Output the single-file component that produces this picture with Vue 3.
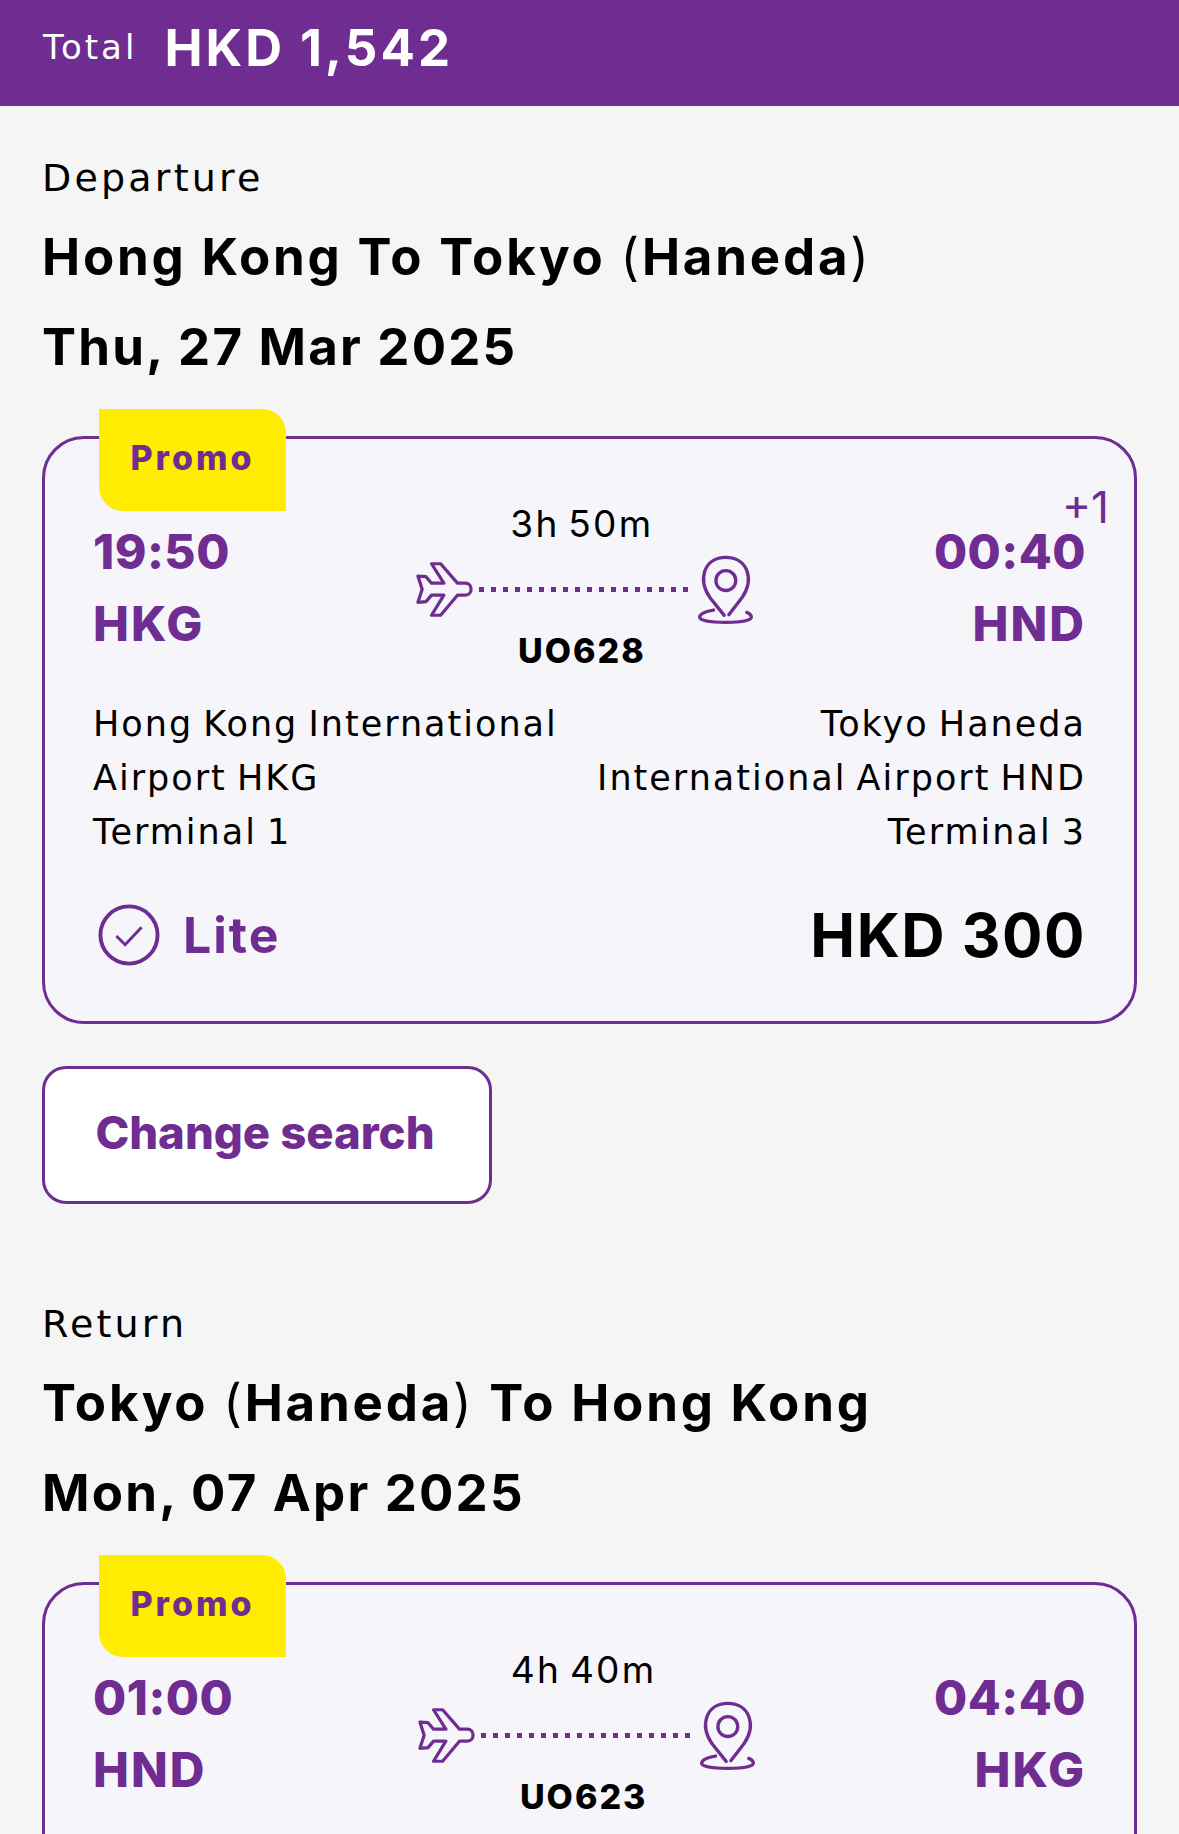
<script setup>
const sections = [
  {
    label: 'Departure',
    route: ['Hong Kong To Tokyo ', '(', 'Haneda', ')'],
    date: 'Thu, 27 Mar 2025',
    dep: '19:50', depCode: 'HKG',
    arr: '00:40', arrCode: 'HND', plus: '+1',
    duration: '3h 50m', flight: 'UO628',
    from: ['Hong Kong International', 'Airport HKG', 'Terminal 1'],
    to: ['Tokyo Haneda', 'International Airport HND', 'Terminal 3'],
    fare: 'Lite', price: 'HKD 300',
    button: 'Change search'
  },
  {
    label: 'Return',
    route: ['Tokyo ', '(', 'Haneda', ') To Hong Kong'],
    date: 'Mon, 07 Apr 2025',
    dep: '01:00', depCode: 'HND',
    arr: '04:40', arrCode: 'HKG', plus: '',
    duration: '4h 40m', flight: 'UO623',
    from: [], to: [], fare: '', price: '', button: ''
  }
]
</script>

<template>
  <div class="page">
    <header class="topbar">
      <span class="total-label">Total</span>
      <span class="total-value">HKD 1,542</span>
    </header>

    <section v-for="s in sections" :key="s.label" class="leg">
      <div class="leg-label">{{ s.label }}</div>
      <h2 class="leg-title">{{ s.route[0] }}<span class="paren">{{ s.route[1] }}</span>{{ s.route[2] }}<span class="paren">{{ s.route[3].charAt(0) }}</span>{{ s.route[3].slice(1) }}</h2>
      <h2 class="leg-title leg-date">{{ s.date }}</h2>

      <div class="card">
        <div class="badge">Promo</div>

        <div class="times">
          <div class="side">
            <div class="big time">{{ s.dep }}</div>
            <div class="big code">{{ s.depCode }}</div>
          </div>
          <div class="mid">
            <div class="duration">{{ s.duration }}</div>
            <div class="path">
              <svg class="plane" viewBox="104 240 176 175" fill="none" stroke="#6f2c91" stroke-width="10" stroke-linejoin="round">
                <path d="M256 308H232L180 248H152L190 308H152L135 288L110 286L123 327L110 367L135 365L152 345H190L152 407H180L232 345H256C280 345 280 308 256 308Z" />
              </svg>
              <span class="dots"></span>
              <svg class="pin" viewBox="950 225 172 214" fill="none" stroke="#6f2c91" stroke-width="10" stroke-linecap="round">
                <circle cx="1037" cy="305" r="30" />
                <path d="M1046 408L1085 358C1125 300 1102 235 1037 235C972 235 950 300 990 358L1032 410" />
                <path d="M1000 394C975 398 958 405 958 416C958 426 990 431 1037 431C1084 431 1114 426 1114 416C1114 409 1108 404 1100 401" />
              </svg>
            </div>
            <div class="flight">{{ s.flight }}</div>
          </div>
          <div class="side right">
            <span v-if="s.plus" class="plus">{{ s.plus }}</span>
            <div class="big time">{{ s.arr }}</div>
            <div class="big code">{{ s.arrCode }}</div>
          </div>
        </div>

        <div v-if="s.from.length" class="airports">
          <div><div v-for="l in s.from" :key="l">{{ l }}</div></div>
          <div class="right"><div v-for="l in s.to" :key="l">{{ l }}</div></div>
        </div>

        <div v-if="s.fare" class="fare-row">
          <div class="fare">
            <svg class="check" viewBox="0 0 64 64" fill="none" stroke="#6f2c91">
              <circle cx="32" cy="32" r="29.5" stroke-width="4" />
              <path d="M19 33L28 42L45 24" stroke-width="3" />
            </svg>
            <span>{{ s.fare }}</span>
          </div>
          <div class="price">{{ s.price }}</div>
        </div>
      </div>

      <button v-if="s.button" class="change">{{ s.button }}</button>
    </section>
  </div>
</template>

<style scoped>
.page {
  height: 1834px;
  overflow: hidden;
  background: #f5f5f5;
  color: #000;
  font-family: Inter, "Noto Sans", sans-serif;
}
.topbar {
  height: 106px;
  background: #6f2c91;
  color: #fff;
  display: flex;
  align-items: center;
  padding: 0 43px 12px;
  box-sizing: border-box;
  gap: 27px;
}
.total-label {
  font-family: "DejaVu Sans", sans-serif;
  font-size: 34px;
  letter-spacing: 3px;
}
.total-value {
  font-size: 51px;
  font-weight: 700;
  letter-spacing: 3px;
}
.leg {
  padding: 44px 42px 0;
}
.leg + .leg {
  padding-top: 92px;
}
.leg-label {
  font-family: "DejaVu Sans", sans-serif;
  font-size: 38px;
  letter-spacing: 3.2px;
  line-height: 56px;
}
.leg-title {
  margin: 0;
  font-size: 51px;
  font-weight: 700;
  letter-spacing: 2.8px;
  line-height: 90px;
}
.leg-date {
  letter-spacing: 2.2px;
}
.leg-label + .leg-title {
  margin-top: 6px;
}
.paren {
  font-weight: 400;
}
.card {
  position: relative;
  margin-top: 44px;
  height: 588px;
  box-sizing: border-box;
  background: #f5f5fa;
  border: 3px solid #6f2c91;
  border-radius: 42px;
  padding: 77px 48px 0;
}
.badge {
  position: absolute;
  left: 54px;
  top: -30px;
  width: 187px;
  height: 102px;
  padding-bottom: 6px;
  box-sizing: border-box;
  background: #ffec00;
  border-radius: 0 24px 0 24px;
  color: #6f2c91;
  font-size: 34px;
  font-weight: 800;
  letter-spacing: 3px;
  display: flex;
  align-items: center;
  justify-content: center;
}
.times {
  display: flex;
  justify-content: space-between;
}
.side {
  position: relative;
}
.right {
  text-align: right;
}
.big {
  color: #6f2c91;
  font-size: 48px;
  font-weight: 800;
  line-height: 72px;
}
.time {
  letter-spacing: 0.5px;
}
.code {
  letter-spacing: 2px;
}
.plus {
  position: absolute;
  right: -23px;
  top: -33px;
  color: #6f2c91;
  font-size: 44px;
  line-height: 48px;
}
.mid {
  display: flex;
  flex-direction: column;
  align-items: center;
  margin-top: -15px;
}
.duration {
  font-size: 37px;
  letter-spacing: 2.3px;
  word-spacing: -4px;
  line-height: 46px;
}
.path {
  display: flex;
  align-items: center;
  gap: 6px;
  height: 72px;
  margin: 6px -3px 0 3px;
}
.plane {
  width: 57px;
  height: 57px;
}
.pin {
  width: 57px;
  height: 71px;
}
.dots {
  width: 212px;
  height: 5px;
  background: repeating-linear-gradient(90deg, #6f2c91 0 5px, transparent 5px 12px);
}
.flight {
  font-size: 34px;
  font-weight: 800;
  letter-spacing: 2px;
  line-height: 46px;
  margin-top: 3px;
}
.airports {
  display: flex;
  justify-content: space-between;
  margin-top: 23px;
  font-family: "DejaVu Sans", sans-serif;
  font-size: 35px;
  letter-spacing: 2px;
  word-spacing: -3px;
  line-height: 54px;
}
.fare-row {
  display: flex;
  justify-content: space-between;
  align-items: center;
  margin-top: 40px;
}
.fare {
  display: flex;
  align-items: center;
  gap: 23px;
  padding-left: 5px;
  color: #6f2c91;
  font-size: 50px;
  font-weight: 700;
  letter-spacing: 2px;
}
.check {
  width: 62px;
  height: 62px;
}
.price {
  font-size: 60px;
  font-weight: 700;
  letter-spacing: 1.5px;
}
.change {
  display: block;
  margin-top: 42px;
  width: 450px;
  height: 138px;
  box-sizing: border-box;
  background: #fff;
  border: 3px solid #6f2c91;
  border-radius: 24px;
  color: #6f2c91;
  font-family: Inter, "Noto Sans", sans-serif;
  font-size: 45.5px;
  font-weight: 800;
  padding: 0 4px 6px 0;
}
</style>
